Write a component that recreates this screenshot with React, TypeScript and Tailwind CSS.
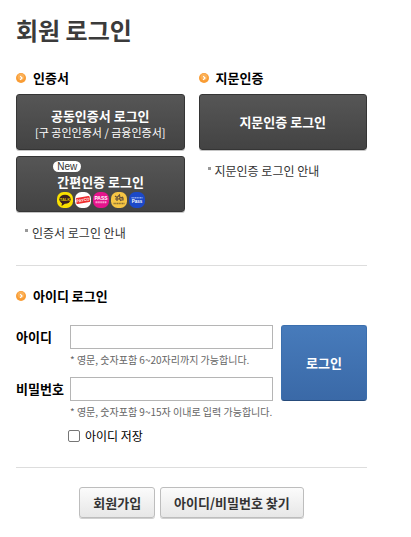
import type { ReactNode } from "react";

function ArrowBullet() {
	return (
		<svg className="size-2.5 shrink-0" viewBox="0 0 10 10" aria-hidden="true">
			<circle cx="5" cy="5" r="5" fill="#f99c34" />
			<circle cx="5" cy="3.8" r="3.4" fill="#fbb057" />
			<path
				d="M4.2 3.2 6 5 4.2 6.8"
				fill="none"
				stroke="#fff"
				strokeWidth="1.2"
			/>
		</svg>
	);
}

function SectionTitle({ children }: { children: ReactNode }) {
	return (
		<h2 className="flex items-center gap-[7px] text-[13px] leading-5 font-bold text-black">
			<ArrowBullet />
			{children}
		</h2>
	);
}

function DarkButton({ children }: { children: ReactNode }) {
	return (
		<button
			type="button"
			className="flex h-14 w-full flex-col items-center justify-center rounded-[3px] border border-[#353535] bg-linear-to-b from-[#565656] to-[#434343] text-[13px] leading-4 font-bold text-white shadow-[0_1px_0_#c4c4c4]"
		>
			{children}
		</button>
	);
}

function GuideLink({ children }: { children: ReactNode }) {
	return (
		<a
			href="#guide"
			className="flex gap-1 pl-[9px] text-xs leading-5 text-[#333]"
		>
			<span className="mt-1.5 size-[3px] shrink-0 bg-[#999]" />
			{children}
		</a>
	);
}

function ProviderIcons() {
	return (
		<svg
			className="h-4 w-[88px]"
			viewBox="0 0 88 16"
			fontFamily="Liberation Sans, Arial, sans-serif"
			fontWeight="bold"
			textAnchor="middle"
			aria-hidden="true"
		>
			<rect width="16" height="16" rx="6.5" fill="#f9e000" />
			<ellipse cx="8" cy="7.3" rx="5.7" ry="4.5" fill="#392020" />
			<path d="M5 10.5 4.6 14 8.3 11.4Z" fill="#392020" />
			<text x="8" y="8.8" fontSize="4" fill="#d9c100">
				TALK
			</text>

			<rect x="18" width="16" height="16" rx="6.5" fill="#fff" />
			<g transform="rotate(-10 26 8)">
				<rect x="19" y="5" width="14" height="6" rx="1" fill="#ef2b2d" />
				<text x="26" y="9.4" fontSize="4" fill="#fff">
					PAYCO
				</text>
			</g>

			<rect x="36" width="16" height="16" rx="6.5" fill="#e5148c" />
			<text x="44" y="7.5" fontSize="5" fill="#fff">
				PASS
			</text>
			<path
				d="M38.5 10.3h11"
				stroke="#f9a5d3"
				strokeWidth="2"
				strokeDasharray="1.4 .5"
			/>

			<rect x="54" width="16" height="16" rx="6.5" fill="#f6c544" />
			<path
				d="m58 4 2 1.5L62.5 3l.5 3 3-1M58 7h5m-3-2v4m2-3 2 3m-1-1h3V6h-2"
				fill="none"
				stroke="#655039"
				strokeWidth="1.2"
			/>
			<path
				d="M56.5 11.5h11"
				stroke="#8b7135"
				strokeWidth="1.5"
				strokeDasharray="1.3 .4"
			/>

			<rect x="72" width="16" height="16" rx="6.5" fill="#1c49c8" />
			<path
				d="M74.5 5.7h11"
				stroke="#8aa6ed"
				strokeWidth="1.5"
				strokeDasharray="1.3 .4"
			/>
			<text x="80" y="11.3" fontSize="4.5" fill="#fff">
				Pass
			</text>
		</svg>
	);
}

function Field({
	id,
	type,
	label,
	hint,
}: {
	id: string;
	type: string;
	label: string;
	hint: string;
}) {
	return (
		<div className="flex">
			<label
				htmlFor={id}
				className="w-[54px] shrink-0 text-[13px] leading-6 font-bold whitespace-nowrap text-black"
			>
				{label}
			</label>
			<div className="min-w-0 grow">
				<input
					id={id}
					name={id}
					type={type}
					aria-describedby={`${id}-hint`}
					className="block h-6 w-full border border-[#b5b5b5] bg-white px-1 text-xs"
				/>
				<p
					id={`${id}-hint`}
					className="text-[10px] leading-[22px] whitespace-nowrap text-[#666]"
				>
					{hint}
				</p>
			</div>
		</div>
	);
}

function LightButton({ children }: { children: ReactNode }) {
	return (
		<button
			type="button"
			className="h-[31px] rounded-[3px] border border-[#bdbdbd] bg-linear-to-b from-[#fbfbfb] to-[#e7e7e7] px-[13px] text-[13px] leading-5 font-bold text-[#333] shadow-[0_1px_0_#d0d0d0]"
		>
			{children}
		</button>
	);
}

export default function App() {
	return (
		<main className="bg-white pt-3 pr-11 pb-4 pl-4 font-['Noto_Sans_CJK_KR',sans-serif]">
			<h1 className="text-2xl leading-9 font-bold text-[#3b3b3b]">
				회원 로그인
			</h1>

			<div className="mt-5 grid grid-cols-2 gap-3.5 border-b border-[#ddd] pb-[22px]">
				<section>
					<SectionTitle>인증서</SectionTitle>
					<div className="mt-1.5 mb-[11px] flex flex-col gap-1.5">
						<DarkButton>
							<span className="pt-1">공동인증서 로그인</span>
							<span className="text-[11px] font-normal whitespace-nowrap">
								[구 공인인증서 / 금융인증서]
							</span>
						</DarkButton>
						<DarkButton>
							<span className="flex flex-col items-start pl-0.5">
								<span className="-ml-1 rounded-full bg-white px-1 font-['Liberation_Sans',sans-serif] text-[10px] leading-[11px] font-normal text-[#333]">
									New
								</span>
								<span className="my-0.5">간편인증 로그인</span>
								<ProviderIcons />
							</span>
						</DarkButton>
					</div>
					<GuideLink>인증서 로그인 안내</GuideLink>
				</section>

				<section>
					<SectionTitle>지문인증</SectionTitle>
					<div className="mt-1.5 mb-[11px]">
						<DarkButton>지문인증 로그인</DarkButton>
					</div>
					<GuideLink>지문인증 로그인 안내</GuideLink>
				</section>
			</div>

			<form
				className="border-b border-[#ddd] pt-5 pb-[19px]"
				onSubmit={(e) => e.preventDefault()}
			>
				<SectionTitle>아이디 로그인</SectionTitle>
				<div className="mt-[19px] flex items-start gap-2">
					<div className="flex min-w-0 grow flex-col gap-1.5">
						<Field
							id="userId"
							type="text"
							label="아이디"
							hint="* 영문, 숫자포함 6~20자리까지 가능합니다."
						/>
						<Field
							id="password"
							type="password"
							label="비밀번호"
							hint="* 영문, 숫자포함 9~15자 이내로 입력 가능합니다."
						/>
					</div>
					<button
						type="submit"
						className="h-[76px] w-[86px] shrink-0 rounded-[3px] border border-[#3b6fae] border-b-[#264b7b] bg-linear-to-b from-[#477bbb] to-[#3a69a7] text-[13px] font-bold text-white"
					>
						로그인
					</button>
				</div>
				<label className="mt-px ml-[52px] flex w-fit items-center gap-[5px] text-xs leading-6 text-black">
					<input
						type="checkbox"
						name="saveId"
						className="size-3 appearance-none rounded-xs border border-[#767676] bg-white checked:bg-[#3b6fae]"
					/>
					아이디 저장
				</label>
			</form>

			<div className="mt-[19px] flex justify-center gap-[5px]">
				<LightButton>회원가입</LightButton>
				<LightButton>아이디/비밀번호 찾기</LightButton>
			</div>
		</main>
	);
}
